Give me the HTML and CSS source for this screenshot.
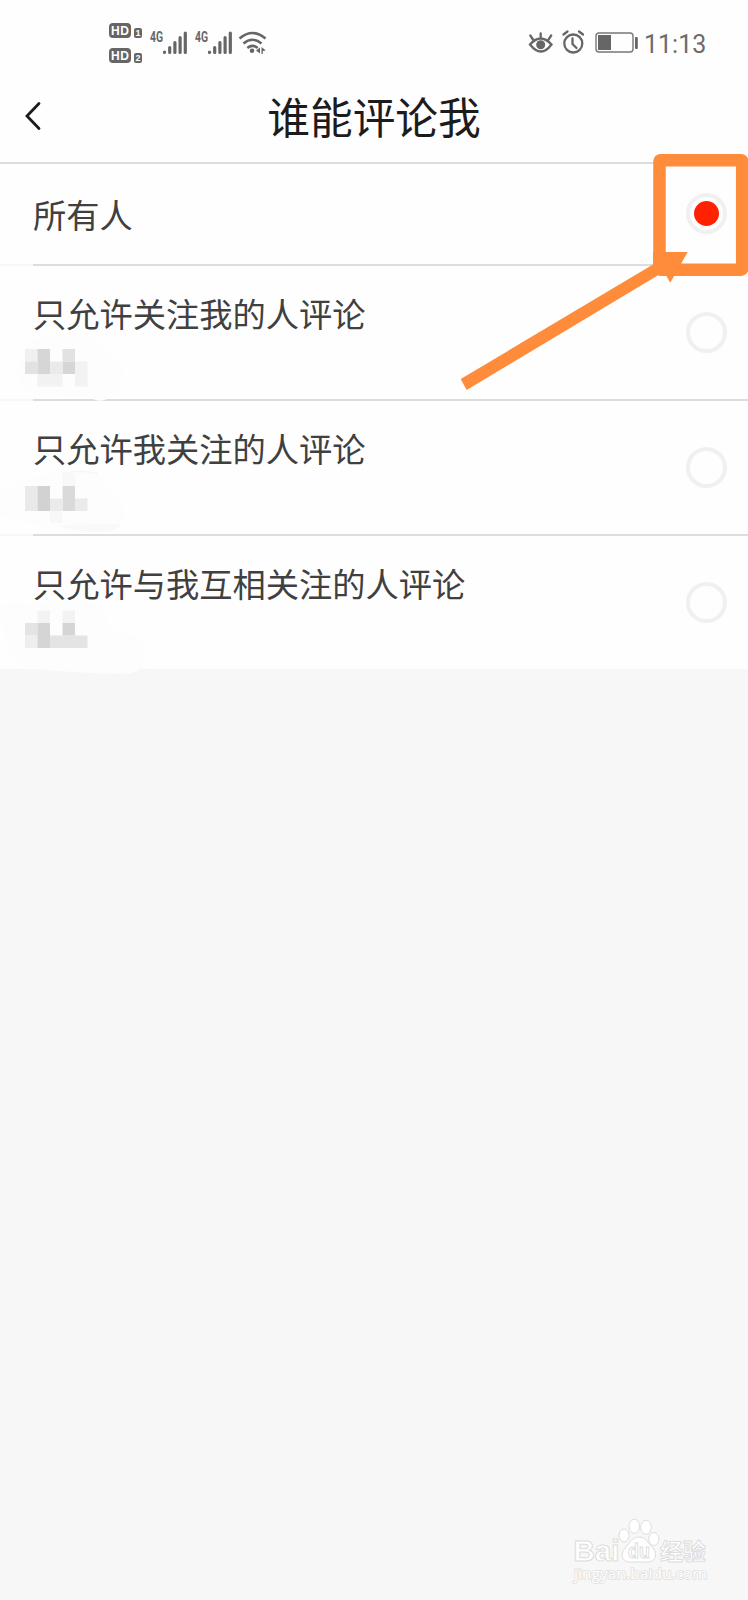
FILE: index.html
```
<!DOCTYPE html>
<html lang="zh-CN">
<head>
    <meta charset="UTF-8">
    <meta name="viewport" content="width=device-width, initial-scale=1.0">
    <title>谁能评论我</title>
    <link rel="stylesheet" href="styles.css">
</head>
<body>

<div class="status-bar">
    <svg class="status-left" width="170" height="50" viewBox="105 18 170 50">
        <!-- HD badges -->
        <g fill="#666">
            <rect x="109" y="23" width="22" height="15" rx="4"/>
            <rect x="134" y="28" width="8" height="10" rx="2"/>
            <rect x="109" y="48" width="22" height="15" rx="4"/>
            <rect x="134" y="53" width="8" height="10" rx="2"/>
        </g>
        <g class="badge-text">
            <text x="111" y="35" textLength="18">HD</text>
            <text x="111" y="60" textLength="18">HD</text>
            <text class="badge-num" x="135.6" y="36.3">1</text>
            <text class="badge-num" x="135.6" y="61.3">2</text>
        </g>
        <!-- signal -->
        <text class="net-text" x="150" y="42" textLength="13" lengthAdjust="spacingAndGlyphs">4G</text>
        <text class="net-text" x="195" y="42" textLength="13" lengthAdjust="spacingAndGlyphs">4G</text>
        <g stroke="#666" stroke-width="3.2" stroke-linecap="round">
            <path d="M164.5 52v0.5M169.7 47.5v5M174.9 42.5v10M180.1 37.5v15M185.3 33v19.5"/>
            <path d="M209.5 52v0.5M214.7 47.5v5M219.9 42.5v10M225.1 37.5v15M230.3 33v19.5"/>
        </g>
        <!-- wifi -->
        <g fill="none" stroke="#666" stroke-width="2.6">
            <path d="M239.500 38.500q13-11 26 0M243.500 43.500q9-7.500 18 0M247.300 48q5.200-4.200 10.400 0"/>
        </g>
        <circle cx="252" cy="50.7" r="2.300" fill="#666"/>
        <path d="M256 50.500l4-3v6zM261.500 47v7h1.300v-3l3-.5z" fill="#666"/>
    </svg>
    <svg class="status-right" width="116" height="34" viewBox="524 26 116 34">
        <g fill="none" stroke="#666" stroke-width="2.300" stroke-linecap="round">
            <path d="M530 44.500q10.500-12 21.500 0q-10.500 14-21.500 0z"/>
            <path d="M540.700 37v-3.500M533 39.500l-2.700-4M548.500 39.500l2.700-4"/>
            <circle cx="573.300" cy="43.500" r="9"/>
            <path d="M572.500 38.500v5.500l4 4"/>
            <path d="M563.500 34.500l4-3M579 31.500l4 3"/>
        </g>
        <circle cx="540.700" cy="44.700" r="4.500" fill="#666"/>
        <rect x="596" y="33" width="37" height="19" rx="3" fill="none" stroke="#777" stroke-width="1.400"/>
        <rect x="598" y="35" width="13" height="15" fill="#666"/>
        <rect x="635" y="37" width="2.800" height="12" rx="1" fill="#666"/>
    </svg>
    <span class="time">11:13</span>
</div>

<div class="header">
    <svg class="back" width="20" height="30" viewBox="0 0 20 30">
        <path d="M15 2.500L3 15l12 12.500" fill="none" stroke="#1c1c1c" stroke-width="2.800" stroke-linecap="round"/>
    </svg>
    <h1>谁能评论我</h1>
</div>

<div class="options">
    <div class="option short">
        <div class="label">所有人</div>
        <span class="radio checked"></span>
        <!-- highlight box and arrow -->
        <svg class="marker" width="288" height="240" viewBox="460 152 288 240">
            <rect x="659.500" y="160.200" width="82.700" height="109.500" rx="1" fill="none" stroke="#ff8c3b" stroke-width="12.500" stroke-linejoin="round"/>
            <path d="M653 252h34.700l-17.400 30.800-4.300-7.500L658.500 275 466.700 390l-6-11L653 264.500z" fill="#ff8c3b"/>
        </svg>
    </div>
    <div class="option">
        <div>
            <div class="label">只允许关注我的人评论</div>
            <svg class="mosaic" width="150" height="63" viewBox="0 2 150 63">
                <path d="M28 7Q55-2 90 2q16 8 22 22q14 6 10 20q-2 10-10 18q-12 9-22 1l-60-5q-16-10-10-30z" fill="#fdfdfd"/>
                <path d="M25 15h12.500v12.500H25z" fill="#f0f0f0"/>
                <path d="M37.500 15H50v25H37.500zM62.500 27.500H75V40H62.500z" fill="#d6d6d6"/>
                <path d="M62.500 15H75v12.500H62.500zM25 27.500h12.500V40H25z" fill="#e2e2e2"/>
                <path d="M50 27.500h12.500V40H50z" fill="#eaeaea"/>
                <path d="M75 27.500h12.500V40H75zM37.500 40h25v12.500h-25zM75 40h12.500v12.500H75z" fill="#f2f2f2"/>
            </svg>
        </div>
        <span class="radio"></span>
    </div>
    <div class="option">
        <div>
            <div class="label">只允许我关注的人评论</div>
            <svg class="mosaic" width="150" height="63" viewBox="0 2 150 63">
                <path d="M0 22Q35 3 65 4h30q10 8 14 20q18 8 15 24q-14 18-45 15Q35 56 10 50L0 46z" fill="#fdfdfd"/>
                <path d="M62 4.500q18-4 36 0" fill="none" stroke="#f6f6f6" stroke-width="1.500"/>
                <path d="M62.500 5H75v12H62.500zM50 42h12.500v12H50z" fill="#f8f8f8"/>
                <path d="M58 56l64-1q-8 8-22 8-26 0-42-7z" fill="#f9f9f9"/>
                <path d="M25 17h12.500v25H25z" fill="#e9e9e9"/>
                <path d="M37.500 17H50v25H37.500z" fill="#d2d2d2"/>
                <path d="M62.500 17H75v25H62.500z" fill="#dadada"/>
                <path d="M50 29.500h12.500V42H50zM75 29.500h12.500V42H75z" fill="#ebebeb"/>
            </svg>
        </div>
        <span class="radio"></span>
    </div>
    <div class="option">
        <div>
            <div class="label">只允许与我互相关注的人评论</div>
            <svg class="mosaic" width="150" height="63" viewBox="0 2 150 63">
                <path d="M0 2q20-6 35 0 20-10 48-4 30 4 24 24l18 8q24 2 21 26-4 14-26 14-50-1-90-6Q6 56 6 40z" fill="#fdfdfd"/>
                <path d="M37.500 6.500H50V19H37.500zM62.500 6.500H75V19H62.500z" fill="#f3f3f3"/>
                <path d="M25 19h12.500v12.500H25zM50 31.500h37.500V44H50z" fill="#e4e4e4"/>
                <path d="M25 31.500h12.500V44H25z" fill="#eee"/>
                <path d="M37.500 19H50v25H37.500zM62.500 19H75v12.500H62.500z" fill="#d5d5d5"/>
            </svg>
        </div>
        <span class="radio"></span>
    </div>
</div>

<svg class="watermark" width="140" height="70" viewBox="570 1515 140 70">
    <g fill="#fff" stroke="#ddd" stroke-width="1">
        <ellipse cx="624" cy="1535.500" rx="5" ry="6.500"/>
        <ellipse cx="634.300" cy="1526.300" rx="5.300" ry="7"/>
        <ellipse cx="646" cy="1527.300" rx="5.300" ry="7"/>
        <ellipse cx="653.800" cy="1539" rx="5" ry="6.500"/>
        <path d="M639 1537c7 0 9 6 13 10 6 6 4 14-3 15h-20c-8-1-9-9-3-15 4-4 6-10 13-10z"/>
    </g>
    <g class="wm-brand">
        <text x="573.500" y="1561" textLength="46" lengthAdjust="spacingAndGlyphs">Bai</text>
        <text class="wm-du" x="628" y="1558" textLength="22" lengthAdjust="spacingAndGlyphs">du</text>
        <text class="wm-cn" x="660" y="1559.500" textLength="46">经验</text>
    </g>
    <text class="wm-url" x="574" y="1579" textLength="133" lengthAdjust="spacingAndGlyphs">jingyan.baidu.com</text>
</svg>

</body>
</html>
```
FILE: styles.css
```
* {
    box-sizing: border-box;
}

body {
    font-family: 'Roboto', 'Noto Sans CJK SC', sans-serif;
    background: #f7f7f7;
    margin: 0;
    min-height: 1600px;
    display: flex;
    flex-direction: column;
}

svg {
    display: block;
}

.status-bar {
    height: 72px;
    padding: 18px 42px 0 105px;
    background-color: #fefefe;
    display: flex;
    align-items: flex-start;
}

.status-right {
    margin: 8px 0 0 auto;
}

.time {
    width: 62px;
    margin: 11px 0 0 4px;
    font-size: 25px;
    line-height: 32px;
    text-align: right;
    white-space: nowrap;
    color: #6c6c6c;
}

.badge-text {
    font: bold 12px 'Liberation Sans', sans-serif;
    fill: #fff;
}

.badge-num {
    font-size: 9px;
}

.net-text {
    font: bold 14px 'Roboto', sans-serif;
    fill: #666;
}

.header {
    height: 92px;
    padding: 0 24px;
    background-color: #fefefe;
    border-bottom: 2px solid #ddd;
    display: grid;
    grid-template-columns: 20px 1fr 20px;
    align-items: center;
}

.back {
    margin-bottom: 2px;
}

.header h1 {
    margin: 0;
    padding-top: 4px;
    font-size: 42.7px;
    font-weight: 400;
    line-height: 60px;
    text-align: center;
    color: #1c1c1c;
}

.options {
    background-color: #fefefe;
}

.option {
    position: relative;
    height: 135px;
    padding-right: 21px;
    display: flex;
    justify-content: space-between;
    align-items: center;
    border-bottom: 2px solid;
    border-image: linear-gradient(to right, #f7f7f7 35px, #ddd 35px) 2;
}

.option:last-child {
    height: 133px;
    border-bottom: none;
}

.option.short {
    height: 102px;
}

.label {
    padding: 30px 0 0 33px;
    font-size: 33.25px;
    line-height: 40px;
    color: #404040;
}

.short .label {
    padding-top: 5px;
}

.mosaic {
    overflow: visible;
}

.radio {
    width: 41px;
    height: 41px;
    border: 4px solid #f0f0f0;
    border-radius: 50%;
    display: flex;
    align-items: center;
    justify-content: center;
}

.radio.checked {
    margin-bottom: 1px;
}

.radio.checked::after {
    content: "";
    width: 25px;
    height: 25px;
    border-radius: 50%;
    background-color: #ff2200;
}

.marker {
    position: absolute;
    top: -12px;
    right: 0;
    z-index: 1;
}

.watermark {
    margin: auto 38px 15px auto;
}

.wm-brand {
    font: bold 29px 'Liberation Sans', sans-serif;
    fill: #fff;
    stroke: #ddd;
    stroke-width: 1px;
}

.wm-du {
    font-size: 20px;
}

.wm-cn {
    font: bold 23px 'Noto Sans CJK SC', sans-serif;
}

.wm-url {
    font: 15px 'Open Sans', sans-serif;
    fill: #fff;
    stroke: #e0e0e0;
    stroke-width: 1.6px;
    paint-order: stroke;
}
```
